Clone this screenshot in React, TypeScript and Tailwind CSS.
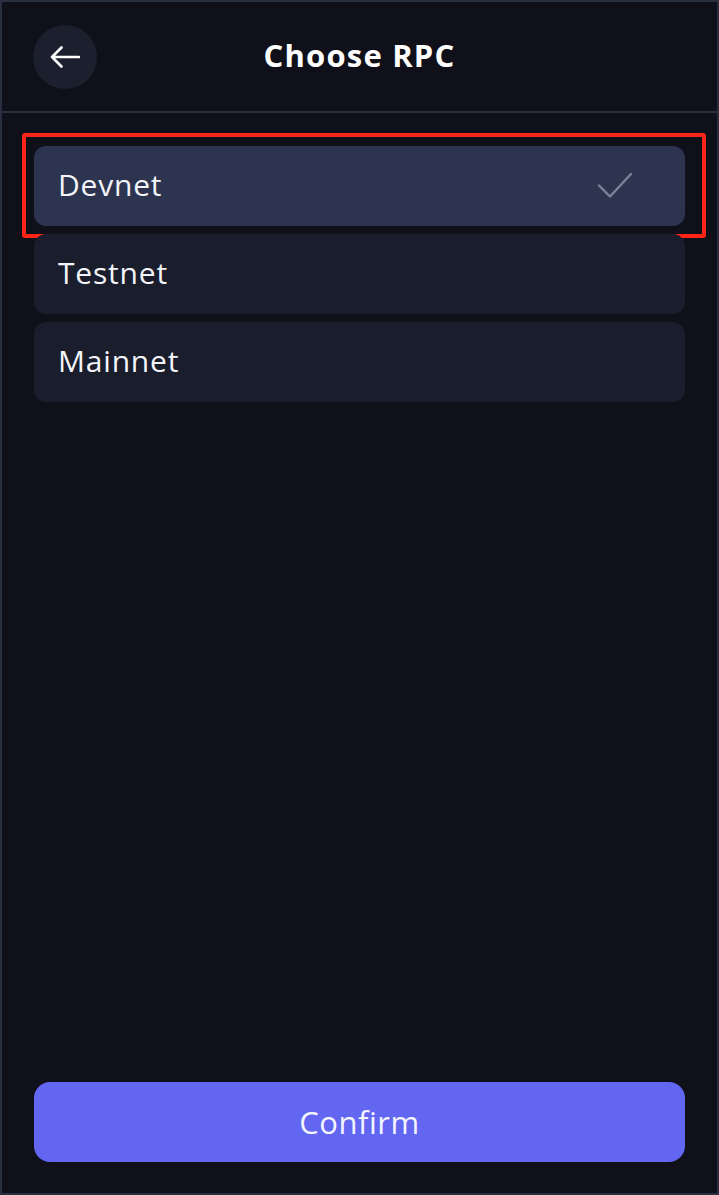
import React from 'react';

interface RpcOption {
  id: string;
  label: string;
}

const OPTIONS: RpcOption[] = [
  { id: 'devnet', label: 'Devnet' },
  { id: 'testnet', label: 'Testnet' },
  { id: 'mainnet', label: 'Mainnet' },
];

const BackArrow = () => (
  <svg width="30" height="22" viewBox="0 0 30 22" fill="none">
    <path d="M29 11H2M11.5 1.5L2 11l9.5 9.5" stroke="#ffffff" strokeWidth="2.6" strokeLinecap="round" strokeLinejoin="round" />
  </svg>
);

const Check = () => (
  <svg width="36" height="28" viewBox="0 0 36 28" fill="none">
    <path d="M2 13.5l11 11L34 2" stroke="#7c8399" strokeWidth="2.4" strokeLinecap="round" strokeLinejoin="round" />
  </svg>
);

const App: React.FC = () => {
  const selected = 'devnet';

  return (
    <div
      className="h-[1195px] w-[719px] flex flex-col bg-[#0f1019] border-2 border-[#2a2f3f] text-white"
      style={{ fontFamily: '"Open Sans", "Liberation Sans", sans-serif' }}
    >
      {/* Header */}
      <div className="h-[111px] shrink-0 flex items-center px-[31px] border-b-2 border-[#2a2f3f]">
        <button className="w-16 h-16 rounded-full bg-[#1c1f2d] flex items-center justify-center shrink-0">
          <BackArrow />
        </button>
        <h1 className="flex-1 text-center text-[31px] font-bold tracking-[1.2px] pr-16 -mt-[2px]">Choose RPC</h1>
      </div>

      {/* Options */}
      <div className="flex-1 flex flex-col gap-2 px-[32px] pt-[33px]">
        {OPTIONS.map((opt) => {
          const active = opt.id === selected;
          return (
            <div key={opt.id} className="relative">
              <div
                className={`h-20 rounded-xl flex items-center justify-between pl-6 pr-[52px] ${
                  active ? 'bg-[#2c3450]' : 'bg-[#1a1d2c]'
                }`}
              >
                <span className="text-[30px] font-medium leading-none tracking-[0.8px] text-[#f4f5fa] -mt-[3px]">
                  {opt.label}
                </span>
                {active && <Check />}
              </div>
              {/* annotation frame */}
              {active && (
                <div className="absolute -left-[12px] -right-[21px] -top-[13px] -bottom-[12px] border-4 border-[#ff2318] rounded-[3px] pointer-events-none" />
              )}
            </div>
          );
        })}
      </div>

      {/* Footer */}
      <div className="px-[32px] pb-[31px]">
        <button className="w-full h-20 rounded-2xl bg-[#6366f1] text-[31px] tracking-[0.5px] text-[#f4f4ff]">Confirm</button>
      </div>
    </div>
  );
};

export default App;
